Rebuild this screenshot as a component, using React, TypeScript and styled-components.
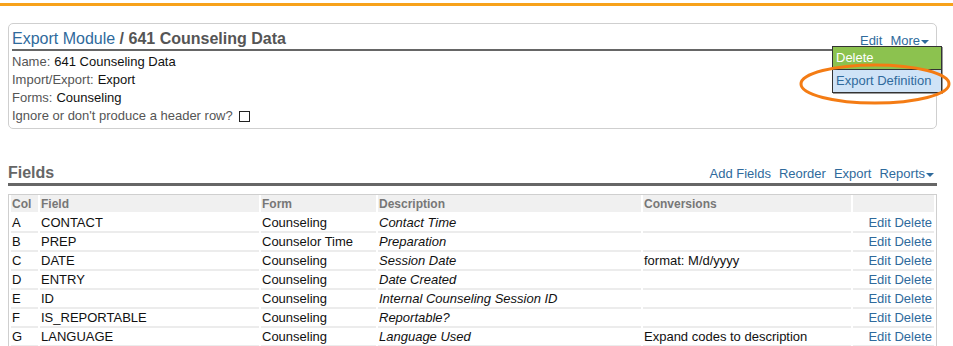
import React from "react";
import styled, { createGlobalStyle } from "styled-components";

const Global = createGlobalStyle`
  html, body { margin: 0; padding: 0; background: #fff; }
  body { font-family: "Liberation Sans", Arial, sans-serif; font-size: 13px; color: #111; }
`;

const TopBar = styled.div`
  margin-top: 3px;
  height: 3px;
  background: #f7a21b;
`;

const Page = styled.div`
  padding: 0 16px 0 8px;
`;

const Panel = styled.div`
  position: relative;
  margin-top: 17px;
  border: 1px solid #cfcfcf;
  border-radius: 5px;
  padding: 6px 4px 3px 3px;
`;

const PanelHead = styled.div`
  display: flex;
  align-items: flex-end;
  justify-content: space-between;
  border-bottom: 2px solid #666;
  height: 19px;
`;

const Title = styled.div`
  font-size: 16px;
  line-height: 20px;
  font-weight: bold;
  color: #555;
`;

const TitleLink = styled.span`
  color: #2f6a9c;
  font-weight: normal;
`;

const Links = styled.div`
  display: flex;
  gap: 8px;
  font-size: 13px;
  line-height: 17px;
  color: #2f6a9c;
  padding-right: 3px;
`;

const Caret = styled.span`
  display: inline-block;
  width: 0;
  height: 0;
  border-left: 4px solid transparent;
  border-right: 4px solid transparent;
  border-top: 4px solid #2f6a9c;
  margin-left: 1px;
  vertical-align: middle;
`;

const Info = styled.div`
  margin-top: 2px;
`;

const InfoRow = styled.div`
  height: 18px;
  line-height: 18px;
  display: flex;
  align-items: center;
  gap: 4px;
`;

const Label = styled.span`
  color: #555;
`;

const Check = styled.span`
  display: inline-block;
  width: 9px;
  height: 9px;
  border: 1px solid #222;
  margin-left: 2px;
`;

const Menu = styled.div`
  position: absolute;
  left: 823px;
  top: 22px;
  width: 108px;
  border: 1px solid #333;
  box-shadow: 1px 1px 0 #999;
`;

const MenuItem = styled.div<{ $active?: boolean }>`
  height: 22px;
  line-height: 22px;
  padding-left: 3px;
  font-size: 13px;
  background: ${(p) => (p.$active ? "#8cc24f" : "#cfe3f7")};
  color: ${(p) => (p.$active ? "#fff" : "#2f6a9c")};
  border-bottom: ${(p) => (p.$active ? "1px solid #333" : "none")};
`;

const Highlight = styled.svg`
  position: absolute;
  left: 790px;
  top: 39px;
  overflow: visible;
`;

const SectionHead = styled.div`
  margin-top: 35px;
  display: flex;
  align-items: baseline;
  justify-content: space-between;
  border-bottom: 3px solid #666;
  height: 19px;
`;

const SectionTitle = styled.div`
  font-size: 16px;
  font-weight: bold;
  color: #666;
`;

const Table = styled.table`
  margin-top: 8px;
  width: 100%;
  border: 1px solid #cfcfcf;
  border-spacing: 2px 0;
  border-collapse: separate;
  table-layout: fixed;
`;

const Th = styled.th`
  background: #f0f0f0;
  color: #777;
  text-align: left;
  font-weight: bold;
  font-size: 12px;
  height: 17px;
  padding: 0 2px 0 1px;
  border-bottom: 2px solid #fff;
`;

const Td = styled.td<{ $italic?: boolean; $right?: boolean }>`
  height: 17px;
  padding: 0 2px 0 1px;
  font-size: 13px;
  border-bottom: 2px solid #ececec;
  white-space: nowrap;
  overflow: hidden;
  font-style: ${(p) => (p.$italic ? "italic" : "normal")};
  text-align: ${(p) => (p.$right ? "right" : "left")};
  color: ${(p) => (p.$right ? "#2f6a9c" : "#111")};
`;

const rows = [
  ["A", "CONTACT", "Counseling", "Contact Time", ""],
  ["B", "PREP", "Counselor Time", "Preparation", ""],
  ["C", "DATE", "Counseling", "Session Date", "format: M/d/yyyy"],
  ["D", "ENTRY", "Counseling", "Date Created", ""],
  ["E", "ID", "Counseling", "Internal Counseling Session ID", ""],
  ["F", "IS_REPORTABLE", "Counseling", "Reportable?", ""],
  ["G", "LANGUAGE", "Counseling", "Language Used", "Expand codes to description"],
];

export default function App() {
  return (
    <>
      <Global />
      <TopBar />
      <Page>
        <Panel>
          <PanelHead>
            <Title>
              <TitleLink>Export Module</TitleLink> / 641 Counseling Data
            </Title>
            <Links>
              <span>Edit</span>
              <span>
                More
                <Caret />
              </span>
            </Links>
          </PanelHead>
          <Info>
            <InfoRow>
              <Label>Name:</Label> 641 Counseling Data
            </InfoRow>
            <InfoRow>
              <Label>Import/Export:</Label> Export
            </InfoRow>
            <InfoRow>
              <Label>Forms:</Label> Counseling
            </InfoRow>
            <InfoRow>
              <Label>Ignore or don't produce a header row?</Label>
              <Check />
            </InfoRow>
          </Info>
          <Menu>
            <MenuItem $active>Delete</MenuItem>
            <MenuItem>Export Definition</MenuItem>
          </Menu>
          <Highlight width="152" height="42" viewBox="0 0 152 42">
            <ellipse cx="76" cy="21" rx="74" ry="19" fill="none" stroke="#f47c14" strokeWidth="3" />
          </Highlight>
        </Panel>
        <SectionHead>
          <SectionTitle>Fields</SectionTitle>
          <Links>
            <span>Add Fields</span>
            <span>Reorder</span>
            <span>Export</span>
            <span>
              Reports
              <Caret />
            </span>
          </Links>
        </SectionHead>
        <Table>
          <colgroup>
            <col style={{ width: 27 }} />
            <col style={{ width: 219 }} />
            <col style={{ width: 115 }} />
            <col style={{ width: 263 }} />
            <col style={{ width: 208 }} />
            <col />
          </colgroup>
          <thead>
            <tr>
              <Th>Col</Th>
              <Th>Field</Th>
              <Th>Form</Th>
              <Th>Description</Th>
              <Th>Conversions</Th>
              <Th></Th>
            </tr>
          </thead>
          <tbody>
            {rows.map((r) => (
              <tr key={r[0]}>
                <Td>{r[0]}</Td>
                <Td>{r[1]}</Td>
                <Td>{r[2]}</Td>
                <Td $italic>{r[3]}</Td>
                <Td>{r[4]}</Td>
                <Td $right>Edit Delete</Td>
              </tr>
            ))}
          </tbody>
        </Table>
      </Page>
    </>
  );
}
